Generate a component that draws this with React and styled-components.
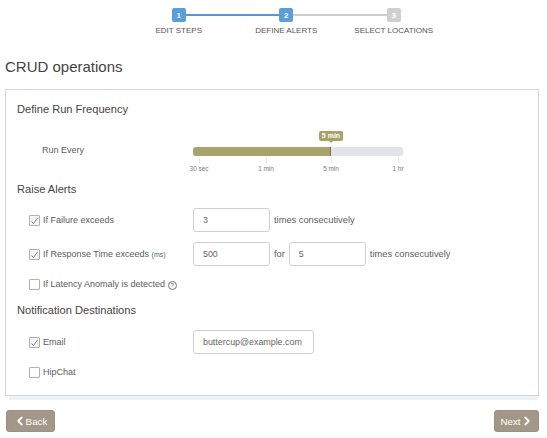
import React from 'react';
import styled, { createGlobalStyle } from 'styled-components';
import { ChevronLeft, ChevronRight } from 'lucide-react';

const GlobalStyle = createGlobalStyle`
  html, body { margin: 0; padding: 0; background: #fff; }
  body { font-family: "Liberation Sans", Arial, sans-serif; color: #555; }
`;

const steps = [
  { n: 1, label: 'EDIT STEPS', on: true },
  { n: 2, label: 'DEFINE ALERTS', on: true },
  { n: 3, label: 'SELECT LOCATIONS', on: false },
];

const ticks = [
  { label: '30 sec', left: 6 },
  { label: '1 min', left: 73 },
  { label: '5 min', left: 138 },
  { label: '1 hr', left: 205 },
];

const App = () => (
  <Page>
    <GlobalStyle />
    <Stepper>
      {steps.map((s, i) => (
        <Step key={s.n}>
          {i < 2 && <Connector $on={i === 0} />}
          <StepBox $on={s.on}>{s.n}</StepBox>
          <StepLabel>{s.label}</StepLabel>
        </Step>
      ))}
    </Stepper>
    <Title>CRUD operations</Title>
    <Panel>
      <Heading>Define Run Frequency</Heading>
      <SliderRow>
        <RunLabel>Run Every</RunLabel>
        <Slider>
          <Bubble>5 min</Bubble>
          <Track><Fill /></Track>
          <Ticks>
            {ticks.map(t => (
              <Tick key={t.label} style={{ left: t.left }}>
                <TickMark />
                <TickText>{t.label}</TickText>
              </Tick>
            ))}
          </Ticks>
        </Slider>
      </SliderRow>

      <Heading $top={16}>Raise Alerts</Heading>
      <Row $top={12}>
        <Check checked label="If Failure exceeds" />
        <Input $w={77} defaultValue="3" />
        <Text>times consecutively</Text>
      </Row>
      <Row $top={10}>
        <Check checked label={<>If Response Time exceeds <Small>(ms)</Small></>} />
        <Input $w={77} defaultValue="500" />
        <Text>for</Text>
        <Input $w={77} defaultValue="5" />
        <Text>times consecutively</Text>
      </Row>
      <Row $top={11} $h={14}>
        <Check label={<>If Latency Anomaly is detected <Help>?</Help></>} />
      </Row>

      <Heading $top={12}>Notification Destinations</Heading>
      <Row $top={13}>
        <Check checked label="Email" />
        <Input $w={121} defaultValue="buttercup@example.com" />
      </Row>
      <Row $top={11} $h={14}>
        <Check label="HipChat" />
      </Row>
    </Panel>
    <Shadow />
    <Footer>
      <NavButton $w={49}><ChevronLeft size={14} strokeWidth={3.2} />Back</NavButton>
      <NavButton $w={45}>Next<ChevronRight size={14} strokeWidth={3.2} /></NavButton>
    </Footer>
  </Page>
);

const Check = ({ checked, label }) => (
  <CheckWrap>
    <Box $checked={checked}>
      {checked && (
        <svg width="9" height="9" viewBox="0 0 9 9" fill="none">
          <path d="M1.5 5.5l2 2 4-5.5" stroke="#666" strokeWidth="0.8" />
        </svg>
      )}
    </Box>
    <CheckText>{label}</CheckText>
  </CheckWrap>
);

const Page = styled.div`
  width: 547px;
  height: 438px;
  overflow: hidden;
  padding: 8px 8px 0 5px;
  box-sizing: border-box;
`;

const Stepper = styled.div`
  display: grid;
  grid-template-columns: repeat(3, 107.5px);
  margin-left: 120px;
`;

const Step = styled.div`
  position: relative;
  display: flex;
  flex-direction: column;
  align-items: center;
`;

const Connector = styled.div`
  position: absolute;
  top: 6px;
  left: 60px;
  width: 94px;
  height: 2px;
  background: ${p => (p.$on ? '#4f9bd9' : '#cfcfcf')};
`;

const StepBox = styled.div`
  width: 14px;
  height: 14px;
  border-radius: 2px;
  background: ${p => (p.$on ? '#5a9fd8' : '#cfcfcf')};
  color: #fff;
  font-size: 8px;
  font-weight: bold;
  display: flex;
  align-items: center;
  justify-content: center;
`;

const StepLabel = styled.div`
  margin-top: 4px;
  font-size: 8px;
  line-height: 10px;
  color: #555;
  white-space: nowrap;
`;

const Title = styled.h1`
  margin: 21px 0 0;
  font-size: 15px;
  line-height: 20px;
  font-weight: normal;
  color: #444;
`;

const Panel = styled.div`
  margin-top: 12px;
  height: 307px;
  box-sizing: border-box;
  border: 1px solid #d6d6d6;
  background: #fff;
  padding: 12px 11px 0;
`;

const Shadow = styled.div`
  height: 4px;
  margin: 0 1px 0 4px;
  background: #eef1f6;
`;

const Heading = styled.h2`
  margin: ${p => p.$top || 0}px 0 0;
  font-size: 11.1px;
  line-height: 14px;
  font-weight: normal;
  color: #444;
`;

const SliderRow = styled.div`
  display: flex;
  margin-top: 19px;
  height: 31px;
`;

const RunLabel = styled.div`
  width: 176px;
  padding: 9px 0 0 25px;
  box-sizing: border-box;
  font-size: 9px;
  line-height: 12px;
  color: #5c5c5c;
`;

const Slider = styled.div`
  position: relative;
  width: 210px;
  padding-top: 12px;
`;

const Bubble = styled.div`
  position: absolute;
  top: -4px;
  left: 126px;
  width: 24px;
  height: 10px;
  border-radius: 2px;
  background: #a8a36b;
  color: #fff;
  font-size: 7px;
  font-weight: bold;
  line-height: 10px;
  text-align: center;

  &::after {
    content: '';
    position: absolute;
    left: 10px;
    top: 10px;
    border: 2px solid transparent;
    border-top-color: #a8a36b;
  }
`;

const Track = styled.div`
  height: 9px;
  border-radius: 3px;
  background: #e1e4e9;
  overflow: hidden;
`;

const Fill = styled.div`
  width: 138px;
  height: 9px;
  background: #a8a36b;
  border-right: 1px solid #77734a;
  box-sizing: border-box;
`;

const Ticks = styled.div`
  position: relative;
`;

const Tick = styled.div`
  position: absolute;
  top: 2px;
  width: 0;
  display: flex;
  flex-direction: column;
  align-items: center;
`;

const TickMark = styled.div`
  width: 1px;
  height: 5px;
  background: #e2e2e2;
  flex: none;
`;

const TickText = styled.div`
  margin-top: 2px;
  font-size: 6.4px;
  line-height: 8px;
  color: #777;
  white-space: nowrap;
`;

const Row = styled.div`
  display: flex;
  align-items: center;
  gap: 4px;
  margin-top: ${p => p.$top || 0}px;
  height: ${p => p.$h || 24}px;
`;

const CheckWrap = styled.label`
  display: flex;
  align-items: center;
  width: 172px;
  padding-left: 12px;
  box-sizing: border-box;
  flex: none;
`;

const Box = styled.span`
  width: 11px;
  height: 11px;
  box-sizing: border-box;
  flex: none;
  border: 1px solid #b0b0b0;
  border-radius: 1px;
  background: ${p => (p.$checked ? '#f4f4f4' : '#fff')};
  display: flex;
`;

const CheckText = styled.span`
  margin-left: 3px;
  font-size: 9px;
  line-height: 12px;
  color: #5c5c5c;
  white-space: nowrap;
`;

const Small = styled.span`
  font-size: 7px;
`;

const Help = styled.span`
  display: inline-block;
  width: 7px;
  height: 7px;
  border: 1px solid #777;
  border-radius: 50%;
  font-size: 6px;
  line-height: 7px;
  text-align: center;
  vertical-align: 0;
`;

const Input = styled.input`
  width: ${p => p.$w}px;
  height: 24px;
  box-sizing: border-box;
  margin: 0;
  padding: 0 9px;
  border: 1px solid #cfcfcf;
  border-radius: 3px;
  outline: none;
  font-family: inherit;
  font-size: 8.9px;
  color: #666;
  flex: none;
`;

const Text = styled.span`
  font-size: 9.3px;
  color: #5c5c5c;
  white-space: nowrap;
`;

const Footer = styled.div`
  display: flex;
  justify-content: space-between;
  margin: 10px 0 0 1px;
`;

const NavButton = styled.button`
  width: ${p => p.$w}px;
  height: 22px;
  padding: 0;
  border: 1px solid #9c9080;
  border-radius: 3px;
  background: #a39888;
  color: #fff;
  font-family: inherit;
  font-size: 9.8px;
  display: flex;
  align-items: center;
  justify-content: center;

  svg {
    margin: 0 -1px;
    flex: none;
  }
`;

export default App;
